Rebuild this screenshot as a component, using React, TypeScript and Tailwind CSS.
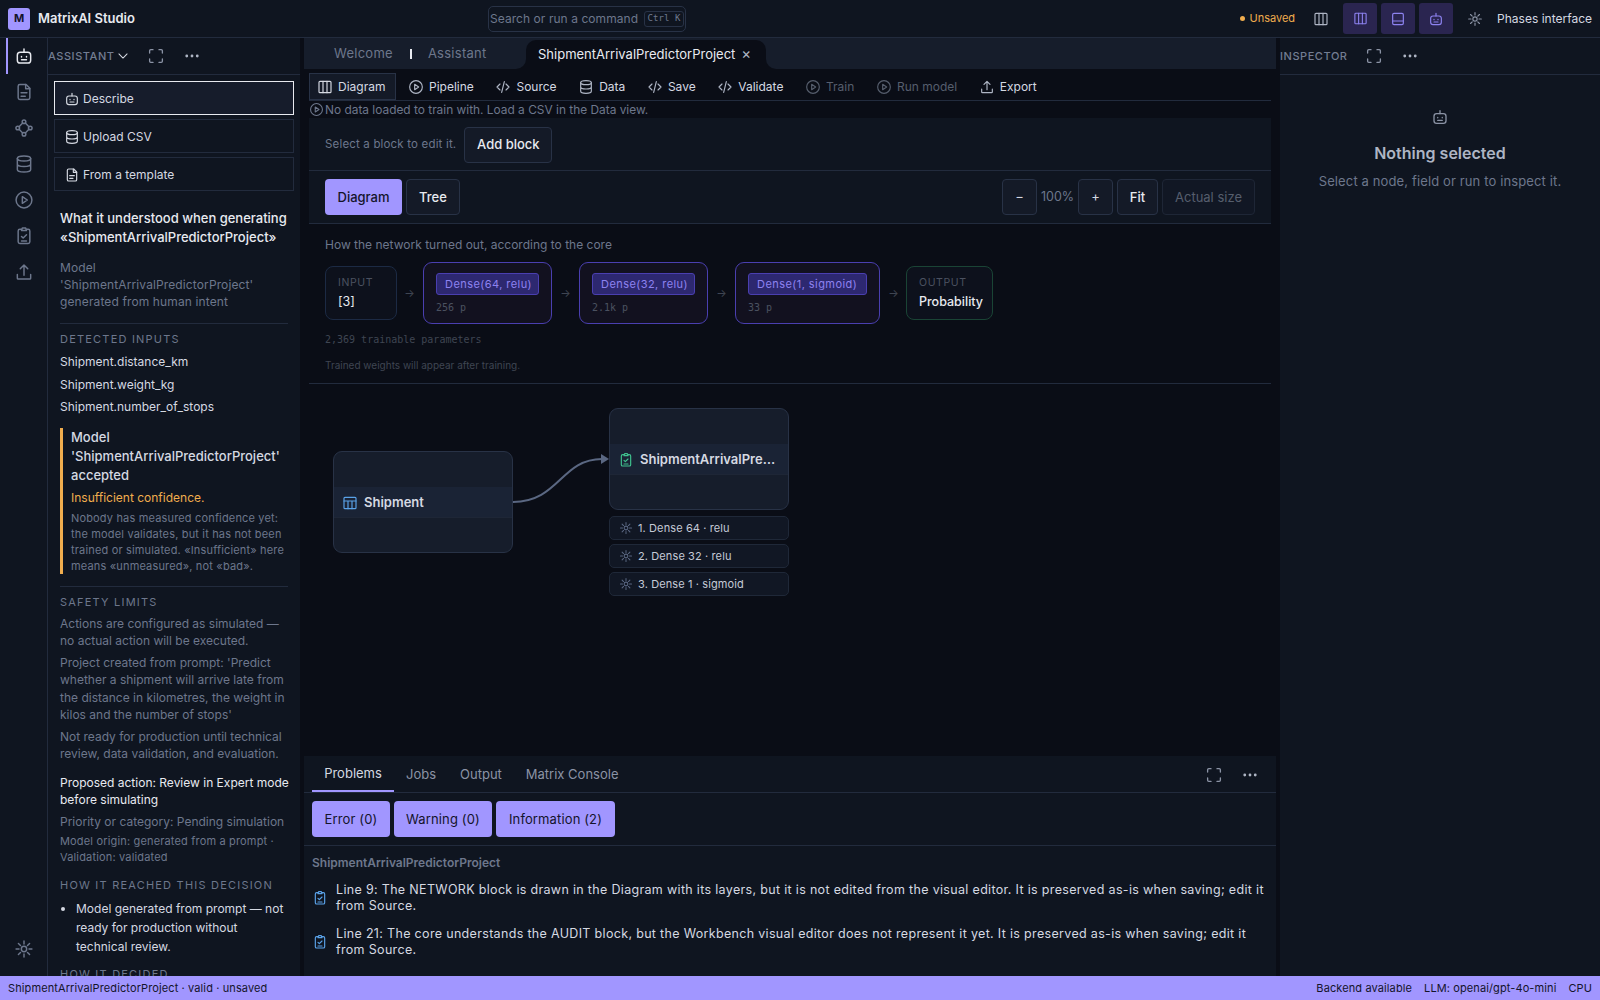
import React from "react";

const Ico: React.FC<{ size?: number; className?: string; sw?: number; children: React.ReactNode }> = ({
  size = 16,
  className = "",
  sw = 1.75,
  children,
}) => (
  <svg
    width={size}
    height={size}
    viewBox="0 0 24 24"
    fill="none"
    stroke="currentColor"
    strokeWidth={sw}
    strokeLinecap="round"
    strokeLinejoin="round"
    className={`shrink-0 ${className}`}
  >
    {children}
  </svg>
);

type IconProps = { size?: number; className?: string; sw?: number };

const BotIcon = (p: IconProps) => (
  <Ico {...p}>
    <rect x="4" y="7.5" width="16" height="13" rx="3.5" />
    <path d="M12 7.5V3.5M9 12.5v.6M15 12.5v.6M9 16.5h6" />
  </Ico>
);
const DocIcon = (p: IconProps) => (
  <Ico {...p}>
    <path d="M7 3h7.5L19 7.5V19a2 2 0 0 1-2 2H7a2 2 0 0 1-2-2V5a2 2 0 0 1 2-2z" />
    <path d="M14 3v5h5M8.5 13h7M8.5 17h5" />
  </Ico>
);
const NodesIcon = (p: IconProps) => (
  <Ico {...p}>
    <circle cx="12" cy="4.5" r="2.2" />
    <circle cx="12" cy="19.5" r="2.2" />
    <circle cx="4.5" cy="12" r="2.2" />
    <circle cx="19.5" cy="12" r="2.2" />
    <path d="M10.4 6.1 6.1 10.4M13.6 6.1l4.3 4.3M6.1 13.6l4.3 4.3M17.9 13.6l-4.3 4.3" />
  </Ico>
);
const DbIcon = (p: IconProps) => (
  <Ico {...p}>
    <ellipse cx="12" cy="5.5" rx="8" ry="3" />
    <path d="M4 5.5v13c0 1.7 3.6 3 8 3s8-1.3 8-3v-13M4 12c0 1.7 3.6 3 8 3s8-1.3 8-3" />
  </Ico>
);
const PlayIcon = (p: IconProps) => (
  <Ico {...p}>
    <circle cx="12" cy="12" r="9.5" />
    <path d="M10 8l6 4-6 4z" />
  </Ico>
);
const ClipIcon = (p: IconProps) => (
  <Ico {...p}>
    <path d="M9 4H7a2 2 0 0 0-2 2v13a2 2 0 0 0 2 2h10a2 2 0 0 0 2-2V6a2 2 0 0 0-2-2h-2" />
    <path d="M9 5.5 10 2.5h4l1 3zM9 12.5l2 2 4-4M9 18h6" />
  </Ico>
);
const UploadIcon = (p: IconProps) => (
  <Ico {...p}>
    <path d="M12 16V3.5M7.5 8 12 3.5 16.5 8M4 15v4.5a1 1 0 0 0 1 1h14a1 1 0 0 0 1-1V15" />
  </Ico>
);
const SunIcon = (p: IconProps) => (
  <Ico {...p}>
    <circle cx="12" cy="12" r="3.2" />
    <path d="M12 2.5v3.5M12 18v3.5M2.5 12H6M18 12h3.5M5.3 5.3l2.5 2.5M16.2 16.2l2.5 2.5M5.3 18.7l2.5-2.5M16.2 7.8l2.5-2.5" />
  </Ico>
);
const CodeIcon = (p: IconProps) => (
  <Ico {...p}>
    <path d="M7.5 7.5 3 12l4.5 4.5M16.5 7.5 21 12l-4.5 4.5M14 4l-4 16" />
  </Ico>
);
const ColumnsIcon = (p: IconProps) => (
  <Ico {...p}>
    <rect x="3" y="3.5" width="18" height="17" rx="1.5" />
    <path d="M9 3.5v17M15 3.5v17" />
  </Ico>
);
const PanelBottomIcon = (p: IconProps) => (
  <Ico {...p}>
    <rect x="4" y="3.5" width="16" height="17" rx="2" />
    <path d="M4 15h16" />
  </Ico>
);
const ExpandIcon = (p: IconProps) => (
  <Ico {...p}>
    <path d="M3.5 8V5a1.5 1.5 0 0 1 1.5-1.5h3M16 3.5h3A1.5 1.5 0 0 1 20.5 5v3M20.5 16v3a1.5 1.5 0 0 1-1.5 1.5h-3M8 20.5H5A1.5 1.5 0 0 1 3.5 19v-3" />
  </Ico>
);
const DotsIcon = (p: IconProps) => (
  <Ico {...p}>
    <circle cx="5" cy="12" r="1" fill="currentColor" />
    <circle cx="12" cy="12" r="1" fill="currentColor" />
    <circle cx="19" cy="12" r="1" fill="currentColor" />
  </Ico>
);
const ChevronIcon = (p: IconProps) => (
  <Ico {...p}>
    <path d="M5 8.5l7 7 7-7" />
  </Ico>
);
const TableIcon = (p: IconProps) => (
  <Ico {...p}>
    <rect x="3" y="3.5" width="18" height="17" rx="1.5" />
    <path d="M3 9h18M9 9v11.5M15 9v11.5" />
  </Ico>
);

const SectionLabel: React.FC<{ className?: string; children: React.ReactNode }> = ({ className = "", children }) => (
  <div className={`text-[11px] leading-[14px] tracking-[0.11em] text-[#6d778c] ${className}`}>{children}</div>
);

const ToolButton: React.FC<{ icon: React.ReactNode; label: string; active?: boolean; dim?: boolean }> = ({
  icon,
  label,
  active,
  dim,
}) => (
  <div
    className={`flex h-[27px] items-center gap-[5px] whitespace-nowrap text-[12px] ${
      active
        ? "-mr-[2px] border border-[#283246] bg-[#141a27] pl-[7px] pr-[10px] text-[#d5d9e2]"
        : dim
          ? "px-[8px] text-[#565e6d]"
          : "px-[8px] text-[#d5d9e2]"
    }`}
  >
    {icon}
    {label}
  </div>
);

const LayerCard: React.FC<{ name: string; params: string }> = ({ name, params }) => (
  <div className="flex h-[62px] flex-col rounded-[9px] border border-[#4a3fb0] bg-[#12111f] px-3 pt-[10px]">
    <div className="flex h-[22px] items-center whitespace-nowrap rounded-[3px] border border-[#4a3fb0] bg-[#2d2870] px-[8px] text-[11px] tracking-[0.04em] text-[#8d82f0]">
      {name}
    </div>
    <div className="mt-[7px] font-['DejaVu_Sans_Mono',monospace] text-[10px] leading-[12px] text-[#4b5160]">{params}</div>
  </div>
);

const Arrow: React.FC<{ className?: string }> = ({ className = "" }) => (
  <span className={`w-[11px] text-center text-[11px] text-[#3f4552] ${className}`}>→</span>
);

const SubLayer: React.FC<{ label: string }> = ({ label }) => (
  <div className="flex h-6 items-center gap-[5px] rounded-[5px] border border-[#1f2838] bg-[#111724] pl-[9px] text-[11px] tracking-[0.01em] text-[#c5cad6]">
    <SunIcon size={14} className="text-[#5a6782]" />
    {label}
  </div>
);

const App: React.FC = () => {
  return (
    <div className="flex h-screen w-full flex-col overflow-hidden bg-[#0a0d16] font-['Inter',sans-serif] text-[#d5d9e2]">
      {/* Top bar */}
      <header className="flex h-[38px] shrink-0 items-center border-b border-[#222b3d] bg-[#0f1520] pl-2 pr-2">
        <div className="flex w-[480px] shrink-0 items-center gap-2">
          <div className="flex h-[22px] w-[22px] items-center justify-center rounded-[3px] bg-[#a196ff] text-[11px] font-bold text-[#14142b]">
            M
          </div>
          <span className="text-[13px] font-semibold text-[#e8eaf0]">MatrixAI Studio</span>
        </div>
        <div className="flex h-[26px] w-[198px] items-center justify-between whitespace-nowrap rounded-[5px] border border-[#283246] pl-[1px] pr-[1px] text-[12px] tracking-[0.005em] text-[#6d778c]">
          Search or run a command
          <span className="flex h-[16px] w-[40px] items-center justify-center rounded-[3px] border border-[#283246] font-['DejaVu_Sans_Mono',monospace] text-[9px] text-[#6d778c]">
            Ctrl K
          </span>
        </div>
        <div className="ml-auto flex items-center">
          <span className="mr-[1px] h-[5px] w-[5px] rounded-full bg-[#f0ad4e]" />
          <span className="ml-[3px] mr-[18px] text-[11px] text-[#f0ad4e]">Unsaved</span>
          <ColumnsIcon size={16} className="mr-[14px] text-[#aeb5c4]" />
          <div className="flex items-center gap-1">
            <div className="flex h-[31px] w-[34px] items-center justify-center rounded-[3px] bg-[#2a2550] text-[#8d82f0]">
              <ColumnsIcon size={15} />
            </div>
            <div className="flex h-[31px] w-[34px] items-center justify-center rounded-[3px] bg-[#2a2550] text-[#8d82f0]">
              <PanelBottomIcon size={16} />
            </div>
            <div className="flex h-[31px] w-[34px] items-center justify-center rounded-[3px] bg-[#2a2550] text-[#8d82f0]">
              <BotIcon size={16} />
            </div>
          </div>
          <SunIcon size={16} className="ml-[14px] mr-[14px] text-[#8b93a5]" />
          <span className="text-[12px] text-[#d5d9e2]">Phases interface</span>
        </div>
      </header>

      <div className="flex min-h-0 flex-1">
        {/* Activity bar */}
        <nav className="flex w-[48px] shrink-0 flex-col items-center border-r border-[#222b3d] bg-[#0f1520] text-[#6d778c]">
          <div className="relative flex h-[36px] w-full items-center justify-center text-[#e8eaf0]">
            <span className="absolute bottom-0 left-[6px] top-0 w-[2px] bg-[#a196ff]" />
            <BotIcon size={20} />
          </div>
          <div className="flex h-[36px] w-full items-center justify-center">
            <DocIcon size={20} />
          </div>
          <div className="flex h-[36px] w-full items-center justify-center">
            <NodesIcon size={20} />
          </div>
          <div className="flex h-[36px] w-full items-center justify-center">
            <DbIcon size={20} />
          </div>
          <div className="flex h-[36px] w-full items-center justify-center">
            <PlayIcon size={20} />
          </div>
          <div className="flex h-[36px] w-full items-center justify-center">
            <ClipIcon size={20} />
          </div>
          <div className="flex h-[36px] w-full items-center justify-center">
            <UploadIcon size={20} />
          </div>
          <div className="mt-auto mb-[9px] flex h-[36px] w-full items-center justify-center">
            <SunIcon size={20} />
          </div>
        </nav>

        {/* Assistant panel */}
        <aside className="flex w-[252px] shrink-0 flex-col overflow-hidden bg-[#0f1520]">
          <div className="flex h-[37px] shrink-0 items-center border-b border-[#222b3d] text-[#6d778c]">
            <span className="text-[11px] font-medium tracking-[0.05em] text-[#737d92]">ASSISTANT</span>
            <ChevronIcon size={14} className="ml-[1px] text-[#d5d9e2]" />
            <ExpandIcon size={18} className="ml-[17px] text-[#8b93a5]" />
            <DotsIcon size={18} className="ml-[18px] text-[#aeb5c4]" />
          </div>
          <div className="px-[6px] pt-[6px]">
            <div className="flex flex-col gap-1">
              <div className="flex h-[34px] items-center gap-[3px] border border-[#e8eaf0] bg-[#161c2b] pl-[9px] pt-[1px] text-[12px]">
                <BotIcon size={16} />
                Describe
              </div>
              <div className="flex h-[34px] items-center gap-[3px] border border-[#222b3d] pl-[9px] pt-[1px] text-[12px]">
                <DbIcon size={16} />
                Upload CSV
              </div>
              <div className="flex h-[34px] items-center gap-[3px] border border-[#222b3d] pl-[9px] pt-[1px] text-[12px]">
                <DocIcon size={16} />
                From a template
              </div>
            </div>
          </div>
          <div className="px-3 pt-[18px]">
            <h3 className="text-[13px] font-medium leading-[19px] text-[#e8eaf0]">
              What it understood when generating «ShipmentArrivalPredictorProject»
            </h3>
            <p className="mt-[12px] text-[12px] leading-[17px] tracking-[0.01em] text-[#6d778c]">
              Model 'ShipmentArrivalPredictorProject' generated from human intent
            </p>
            <div className="mt-[13px] border-t border-[#222b3d]" />
            <SectionLabel className="mt-[8px]">DETECTED INPUTS</SectionLabel>
            <div className="mt-[8px] flex flex-col gap-[6px] text-[12px] leading-[16.5px] text-[#d5d9e2]">
              <div>Shipment.distance_km</div>
              <div>Shipment.weight_kg</div>
              <div>Shipment.number_of_stops</div>
            </div>
            <div className="mt-[12px] border-l-[3px] border-[#f0ad4e] pl-2">
              <div className="text-[13px] font-medium leading-[19px] text-[#d5d9e2]">
                Model 'ShipmentArrivalPredictorProject' accepted
              </div>
              <div className="mt-[4px] text-[12px] leading-[17px] text-[#f0ad4e]">Insufficient confidence.</div>
              <div className="mt-[4px] text-[11px] leading-[16px] tracking-[0.015em] text-[#6d778c]">
                Nobody has measured confidence yet: the model validates, but it has not been trained or simulated.
                «Insufficient» here means «unmeasured», not «bad».
              </div>
            </div>
            <div className="mt-[12px] border-t border-[#222b3d]" />
            <SectionLabel className="mt-[8px]">SAFETY LIMITS</SectionLabel>
            <p className="mt-[6px] text-[12px] leading-[17.5px] text-[#6d778c]">
              Actions are configured as simulated — no actual action will be executed.
            </p>
            <p className="mt-[4px] text-[12px] leading-[17.5px] text-[#6d778c]">
              Project created from prompt: 'Predict whether a shipment will arrive late from the distance in kilometres,
              the weight in kilos and the number of stops'
            </p>
            <p className="mt-[4px] text-[12px] leading-[17.5px] text-[#6d778c]">
              Not ready for production until technical review, data validation, and evaluation.
            </p>
            <p className="mt-[11px] -mr-[3px] text-[12px] leading-[17px] text-[#e8eaf0]">
              Proposed action: Review in Expert mode before simulating
            </p>
            <p className="mt-[5px] text-[12px] leading-[17px] text-[#6d778c]">Priority or category: Pending simulation</p>
            <p className="mt-[3px] text-[11px] leading-[16px] tracking-[0.015em] text-[#6d778c]">
              Model origin: generated from a prompt · Validation: validated
            </p>
            <SectionLabel className="mt-[13px]">HOW IT REACHED THIS DECISION</SectionLabel>
            <ul className="mt-[7px] list-disc pl-4 text-[12px] leading-[19px] text-[#d5d9e2]">
              <li>Model generated from prompt — not ready for production without technical review.</li>
            </ul>
            <SectionLabel className="mt-[11px]">HOW IT DECIDED</SectionLabel>
          </div>
        </aside>

        <div className="w-1 shrink-0 bg-[#0a0d16]" />

        {/* Center column */}
        <main className="flex w-[972px] shrink-0 flex-col">
          <div className="flex h-[31px] shrink-0 bg-[linear-gradient(to_bottom,#161d2b_50%,#0a0d16_50%)]">
            <div className="flex w-[222px] shrink-0 items-center rounded-br-[10px] bg-[#161d2b] pl-[30px] text-[13px] tracking-[0.02em] text-[#6d778c]">
              <span>Welcome</span>
              <span className="ml-[17px] mr-[16px] h-[10px] w-[2px] bg-[#e8eaf0]" />
              <span>Assistant</span>
            </div>
            <div className="mt-[2px] flex w-[240px] shrink-0 items-center rounded-t-[10px] bg-[#0a0d16] pl-3 text-[13px] text-[#e8eaf0]">
              ShipmentArrivalPredictorProject
              <span className="ml-[6px] text-[15px] text-[#aeb5c4]">×</span>
            </div>
            <div className="flex-1 rounded-bl-[10px] bg-[#161d2b]" />
          </div>

          <div className="flex min-h-0 flex-1 flex-col overflow-hidden px-[5px]">
            <div className="flex h-[32px] shrink-0 items-end gap-[5.6px] border-b border-[#222b3d]">
              <ToolButton active icon={<ColumnsIcon size={16} />} label="Diagram" />
              <ToolButton icon={<PlayIcon size={16} className="text-[#aeb5c4]" />} label="Pipeline" />
              <ToolButton icon={<CodeIcon size={16} className="text-[#aeb5c4]" />} label="Source" />
              <ToolButton icon={<DbIcon size={16} className="text-[#aeb5c4]" />} label="Data" />
              <ToolButton icon={<CodeIcon size={16} className="text-[#aeb5c4]" />} label="Save" />
              <ToolButton icon={<CodeIcon size={16} className="text-[#aeb5c4]" />} label="Validate" />
              <ToolButton dim icon={<PlayIcon size={16} />} label="Train" />
              <ToolButton dim icon={<PlayIcon size={16} />} label="Run model" />
              <ToolButton icon={<UploadIcon size={16} className="text-[#aeb5c4]" />} label="Export" />
            </div>
            <div className="flex h-[17px] shrink-0 items-center gap-[1px] text-[11.9px] text-[#6d778c]">
              <PlayIcon size={15} />
              No data loaded to train with. Load a CSV in the Data view.
            </div>
            <div className="flex h-[53px] shrink-0 items-center gap-2 border-b border-[#222b3d] bg-[#0f1520] px-4 pt-[2px]">
              <span className="text-[11.5px] tracking-[0.015em] text-[#6d778c]">Select a block to edit it.</span>
              <div className="flex h-9 w-[88px] items-center justify-center rounded-[4px] border border-[#283246] bg-[#141a27] text-[13px] font-medium text-[#e8eaf0]">
                Add block
              </div>
            </div>
            <div className="flex h-[53px] shrink-0 items-center border-b border-[#222b3d] bg-[#0f1520] px-4 text-[13px]">
              <div className="flex h-9 w-[77px] items-center justify-center rounded-[4px] bg-[#a196ff] pt-px font-medium text-[#14142b]">
                Diagram
              </div>
              <div className="ml-1 flex h-9 w-[54px] items-center justify-center rounded-[4px] border border-[#283246] bg-[#141a27] pt-px font-medium text-[#e8eaf0]">
                Tree
              </div>
              <div className="ml-auto flex items-center gap-1">
                <div className="flex h-9 w-[35px] items-center justify-center rounded-[4px] border border-[#283246] bg-[#141a27]">
                  −
                </div>
                <span className="w-[33px] text-center text-[12.5px] text-[#6d778c]">100%</span>
                <div className="flex h-9 w-[35px] items-center justify-center rounded-[4px] border border-[#283246] bg-[#141a27]">
                  +
                </div>
                <div className="flex h-9 w-[41px] items-center justify-center rounded-[4px] border border-[#283246] bg-[#141a27] pt-px font-medium text-[#e8eaf0]">
                  Fit
                </div>
                <div className="flex h-9 w-[93px] items-center justify-center rounded-[4px] border border-[#1e2636] bg-[#111724] pt-px text-[#565e6d]">
                  Actual size
                </div>
              </div>
            </div>

            <div className="flex h-[160px] shrink-0 flex-col border-b border-[#222b3d] px-4 pt-[12px]">
              <div className="text-[12px] leading-[17px] text-[#6d778c]">How the network turned out, according to the core</div>
              <div className="mt-[9px] flex items-center gap-2">
                <div className="flex h-[54px] w-[72px] flex-col rounded-[8px] border border-[#1c2a44] bg-[#0d111c] pl-3 pt-[9px]">
                  <span className="text-[10.5px] leading-[14px] tracking-[0.06em] text-[#4b5160]">INPUT</span>
                  <span className="mt-[4px] text-[12.5px] leading-[16px] text-[#e8eaf0]">[3]</span>
                </div>
                <Arrow className="-ml-px" />
                <div className="w-[129px]">
                  <LayerCard name="Dense(64, relu)" params="256 p" />
                </div>
                <Arrow />
                <div className="w-[129px]">
                  <LayerCard name="Dense(32, relu)" params="2.1k p" />
                </div>
                <Arrow />
                <div className="w-[145px]">
                  <LayerCard name="Dense(1, sigmoid)" params="33 p" />
                </div>
                <Arrow />
                <div className="-ml-px flex h-[54px] w-[87px] flex-col rounded-[8px] border border-[#1a4435] bg-[#0d111c] pl-3 pt-[9px]">
                  <span className="text-[10.5px] leading-[14px] tracking-[0.06em] text-[#4b5160]">OUTPUT</span>
                  <span className="mt-[4px] text-[12.5px] font-medium leading-[16px] text-[#e8eaf0]">Probability</span>
                </div>
              </div>
              <div className="mt-[9px] font-['DejaVu_Sans_Mono',monospace] text-[10px] leading-[14px] text-[#3f4552]">
                2,369 trainable parameters
              </div>
              <div className="mt-[11px] text-[10px] leading-[14px] text-[#3f4552]">Trained weights will appear after training.</div>
            </div>

            {/* Free canvas: node positions are the content */}
            <div className="relative min-h-0 flex-1">
              <svg className="absolute left-0 top-0" width="400" height="200" fill="none">
                <path d="M204 118 C 250 118, 252 75, 293 75" stroke="#5a6782" strokeWidth="2" />
                <path d="M292 70 L300 75 L292 80 Z" fill="#5a6782" />
              </svg>
              <div className="absolute left-[24px] top-[67px] flex h-[102px] w-[180px] items-center overflow-hidden rounded-[9px] border border-[#283246] bg-[#161d2b]">
                <div className="flex h-[31px] w-full items-center gap-[6px] border-b border-[#1e2636] bg-[#1a2335] pl-[8px] pt-[2px] text-[13px] font-semibold text-[#d5d9e2]">
                  <TableIcon size={16} className="text-[#5aa2e8]" />
                  Shipment
                </div>
              </div>
              <div className="absolute left-[300px] top-[24px] flex w-[180px] flex-col gap-1">
                <div className="mb-[2px] flex h-[102px] items-center overflow-hidden rounded-[9px] border border-[#283246] bg-[#161d2b]">
                  <div className="flex h-[31px] w-full items-center gap-[6px] border-b border-[#1e2636] bg-[#1a2335] pl-[8px] pt-[2px] text-[13px] font-semibold text-[#d5d9e2]">
                    <ClipIcon size={16} className="text-[#3fc08e]" />
                    <span className="truncate pr-[8px]">ShipmentArrivalPredictorProject</span>
                  </div>
                </div>
                <SubLayer label="1. Dense 64 · relu" />
                <SubLayer label="2. Dense 32 · relu" />
                <SubLayer label="3. Dense 1 · sigmoid" />
              </div>
            </div>
          </div>

          {/* Bottom panel */}
          <section className="flex h-[220px] shrink-0 flex-col bg-[#0f1520]">
            <div className="flex h-[37px] shrink-0 items-stretch border-b border-[#222b3d] pl-2 pr-[17px] pt-px text-[13px] text-[#8b93a5]">
              <div className="flex w-[82px] items-center justify-center border-b-2 border-[#a196ff] text-[#d5d9e2]">Problems</div>
              <div className="ml-3 flex items-center">Jobs</div>
              <div className="ml-[24px] flex items-center">Output</div>
              <div className="ml-[24px] flex items-center">Matrix Console</div>
              <div className="ml-auto flex items-center gap-[18px]">
                <ExpandIcon size={18} className="text-[#8b93a5]" />
                <DotsIcon size={18} className="text-[#aeb5c4]" />
              </div>
            </div>
            <div className="flex h-[53px] shrink-0 items-center gap-1 border-b border-[#222b3d] pl-2 text-[13px] tracking-[0.01em] text-[#14142b]">
              <div className="flex h-9 w-[78px] items-center justify-center rounded-[4px] bg-[#a196ff] pt-px">Error (0)</div>
              <div className="flex h-9 w-[98px] items-center justify-center rounded-[4px] bg-[#a196ff] pt-px">Warning (0)</div>
              <div className="flex h-9 w-[119px] items-center justify-center rounded-[4px] bg-[#a196ff] pt-px">Information (2)</div>
            </div>
            <div className="pl-2 pr-3 pt-[9px]">
              <div className="text-[12px] font-semibold leading-[16px] text-[#6d778c]">ShipmentArrivalPredictorProject</div>
              <div className="mt-[11px] flex items-center gap-2">
                <ClipIcon size={16} className="text-[#5aa2e8]" />
                <p className="text-[12.5px] leading-[16px] tracking-[0.026em] text-[#d5d9e2]">
                  Line 9: The NETWORK block is drawn in the Diagram with its layers, but it is not edited from the visual editor. It is preserved as-is when saving; edit it from Source.
                </p>
              </div>
              <div className="mt-3 flex items-center gap-2">
                <ClipIcon size={16} className="text-[#5aa2e8]" />
                <p className="text-[12.5px] leading-[16px] tracking-[0.026em] text-[#d5d9e2]">
                  Line 21: The core understands the AUDIT block, but the Workbench visual editor does not represent it yet. It is preserved as-is when saving; edit it from Source.
                </p>
              </div>
            </div>
          </section>
        </main>

        <div className="w-1 shrink-0 bg-[#0a0d16]" />

        {/* Inspector */}
        <aside className="flex min-w-0 flex-1 flex-col bg-[#0f1520]">
          <div className="flex h-[37px] shrink-0 items-center border-b border-[#222b3d]">
            <span className="text-[11px] font-medium tracking-[0.05em] text-[#737d92]">INSPECTOR</span>
            <ExpandIcon size={18} className="ml-[17px] text-[#8b93a5]" />
            <DotsIcon size={18} className="ml-[18px] text-[#aeb5c4]" />
          </div>
          <div className="flex flex-col items-center pt-[33px]">
            <BotIcon size={18} className="text-[#8b93a5]" />
            <div className="mt-[15px] text-[16px] font-semibold leading-[24px] text-[#aeb5c4]">Nothing selected</div>
            <div className="mt-[7px] text-[13px] leading-[18px] tracking-[0.01em] text-[#6d778c]">Select a node, field or run to inspect it.</div>
          </div>
        </aside>
      </div>

      {/* Status bar */}
      <footer className="flex h-6 shrink-0 items-center bg-[#a196ff] px-2 text-[11px] tracking-[0.01em] text-[#14142b]">
        <span>ShipmentArrivalPredictorProject · valid · unsaved</span>
        <div className="ml-auto flex items-center gap-3">
          <span>Backend available</span>
          <span>LLM: openai/gpt-4o-mini</span>
          <span>CPU</span>
        </div>
      </footer>
    </div>
  );
};

export default App;
